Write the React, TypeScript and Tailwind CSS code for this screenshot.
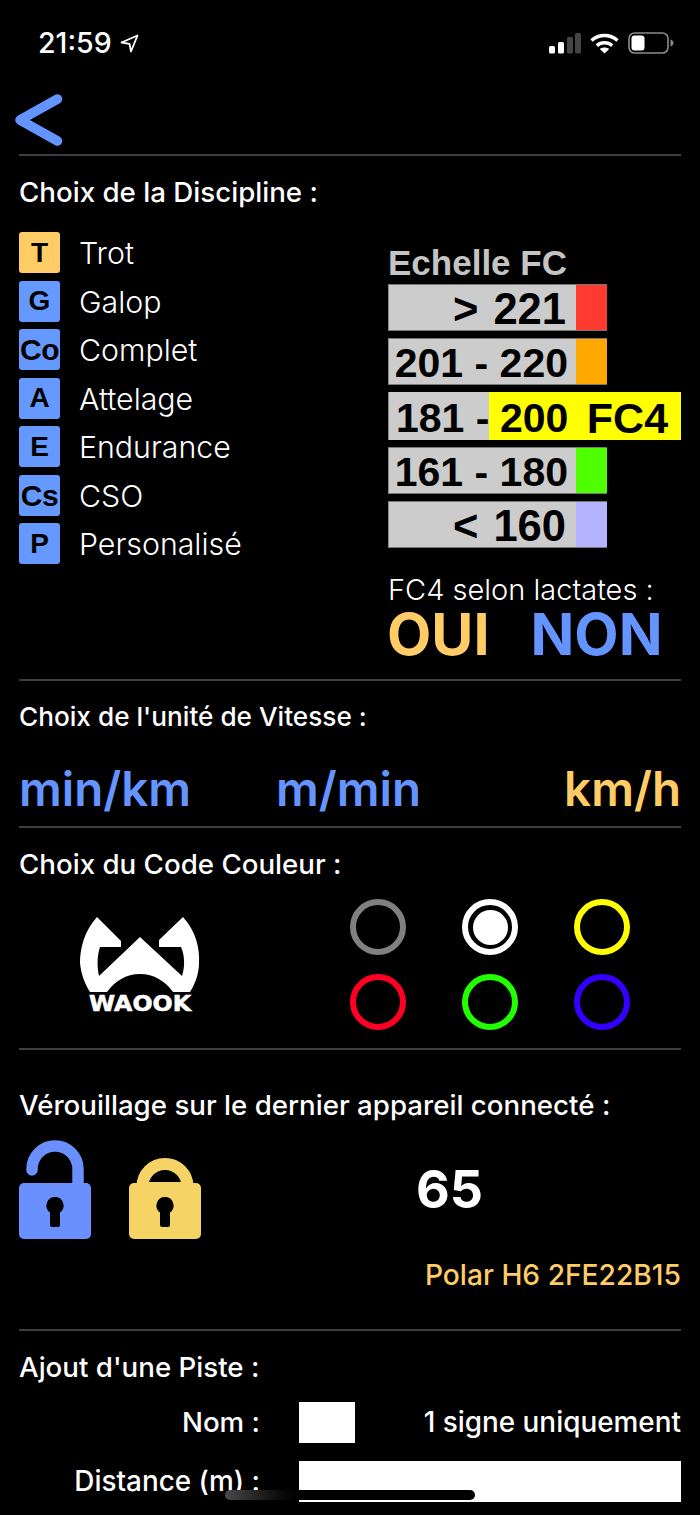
const SANS = "font-['Inter','Liberation_Sans',sans-serif]";

function Divider() {
  return <div className="h-[2px] w-full bg-[#3f3f3f]" />;
}

function Badge({ label, active, sm }: { label: string; active?: boolean; sm?: boolean }) {
  return (
    <div
      className={`flex h-[41px] w-[41px] items-center justify-center rounded-[3px] font-['Liberation_Sans',sans-serif] font-bold text-black ${
        active ? "bg-[#ffcc66]" : "bg-[#6699ff]"
      } ${sm ? "text-[30px] tracking-[-0.5px]" : "text-[28px]"}`}
    >
      {label}
    </div>
  );
}

const disciplines: { b: string; t: string; active?: boolean; sm?: boolean }[] = [
  { b: "T", t: "Trot", active: true },
  { b: "G", t: "Galop" },
  { b: "Co", t: "Complet", sm: true },
  { b: "A", t: "Attelage" },
  { b: "E", t: "Endurance" },
  { b: "Cs", t: "CSO", sm: true },
  { b: "P", t: "Personalisé" },
];

function ScaleRow({ label, color, wide }: { label: string; color: string; wide?: boolean }) {
  return (
    <div className="flex h-[47px] w-[219px] border border-[#8a8a8a] border-r-0 border-y-[#777]">
      <div
        className={`flex w-[187px] items-center justify-end bg-[#cccccc] pt-[5px] font-['Liberation_Sans',sans-serif] font-semibold text-black ${
          wide ? "pr-[10px] text-[43.500px] [word-spacing:3px]" : "pr-[8px] text-[41px]"
        }`}
      >
        <span className="whitespace-pre">{label}</span>
      </div>
      <div className={`w-[31px] ${color}`} />
    </div>
  );
}

function Ring({ color, selected }: { color: string; selected?: boolean }) {
  return (
    <div className={`flex h-[56px] w-[56px] items-center justify-center rounded-full border-[6px] ${color}`}>
      {selected && <div className="h-[35px] w-[35px] rounded-full bg-white" />}
    </div>
  );
}

function Heading({ children, small }: { children: string; small?: boolean }) {
  return (
    <div className={`${small ? "text-[26.200px]" : "text-[27.700px]"} font-medium leading-[32px] whitespace-nowrap text-white`}>
      {children}
    </div>
  );
}

function Keyhole() {
  return <path d="M36 58a8.5 8.5 0 0 1 5 15.4V86a2 2 0 0 1-2 2h-6a2 2 0 0 1-2-2V73.4A8.5 8.5 0 0 1 36 58Z" fill="#000" />;
}

export default function App() {
  return (
    <div className={`relative h-[1515px] w-[700px] overflow-hidden bg-black px-[19px] text-white ${SANS}`}>
      {/* status bar */}
      <div className="flex h-[93px] items-start justify-between pl-[19px] pr-[7px] pt-[25px]">
        <div className="flex items-center gap-[8px]">
          <span className="text-[28.5px] font-medium leading-[36px]">21:59</span>
          <svg width="19" height="19" viewBox="0 0 19 19" fill="none" stroke="#fff" strokeWidth="1.8" strokeLinejoin="round">
            <path d="M1.5 8.5 17.5 1.5 11 17.5 9.5 9.8Z" />
          </svg>
        </div>
        <div className="flex items-center gap-[9px] pt-[7px]">
          <svg width="32" height="21" viewBox="0 0 32 21">
            <rect x="0" y="13" width="6" height="7.5" rx="1.5" fill="#fff" />
            <rect x="9" y="9" width="6" height="11.5" rx="1.5" fill="#fff" />
            <rect x="18" y="4" width="6" height="16.5" rx="1.5" fill="#444" />
            <rect x="26" y="0" width="6" height="20.5" rx="1.5" fill="#444" />
          </svg>
          <svg width="29" height="21" viewBox="0 0 29 21" fill="none">
            <path d="M1.5 7.5C9 .8 20 .8 27.5 7.5" stroke="#fff" strokeWidth="3.4" />
            <path d="M6.8 12.6c4.4-3.8 11-3.8 15.4 0" stroke="#fff" strokeWidth="3.4" />
            <path d="M14.5 20.5 9.8 16c2.7-2 6.7-2 9.4 0Z" fill="#fff" />
          </svg>
          <svg width="46" height="22" viewBox="0 0 46 22">
            <rect x="1" y="1" width="39" height="20" rx="5.5" fill="none" stroke="#8a8a8a" strokeWidth="1.6" />
            <rect x="3.5" y="3.5" width="13" height="15" rx="3" fill="#fff" />
            <path d="M42.5 7.5c2 .6 3 2 3 3.5s-1 2.900-3 3.500Z" fill="#8a8a8a" />
          </svg>
        </div>
      </div>

      {/* back */}
      <div className="-ml-[5px] h-[61px]">
        <svg width="50" height="54" viewBox="0 0 50 54" fill="none">
          <path d="M43.500 6 6 27l37.500 21" stroke="#6494ff" strokeWidth="9.500" strokeLinecap="round" strokeLinejoin="round" />
        </svg>
      </div>
      <Divider />

      {/* discipline */}
      <div className="flex h-[523px] flex-col">
        <div className="pt-[20px]">
          <Heading>Choix de la Discipline :</Heading>
        </div>
        <div className="flex justify-between">
          <div className="flex flex-col gap-[7.500px] pt-[24px]">
            {disciplines.map((d) => (
              <div key={d.b} className="flex items-center gap-[20px]">
                <Badge label={d.b} active={d.active} sm={d.sm} />
                <span className="-ml-[1px] translate-y-[1px] text-[30.300px] font-light leading-[41px]">{d.t}</span>
              </div>
            ))}
          </div>
          <div className="w-[293px] pt-[35px]">
            <div className="font-['Liberation_Sans',sans-serif] text-[35px] font-semibold leading-[40px] text-[#c4c4c4]">
              Echelle FC
            </div>
            <div className="flex flex-col gap-[7px] pt-[1px]">
              <ScaleRow label="> 221" color="bg-[#ff3b30]" wide />
              <ScaleRow label="201 - 220" color="bg-[#ffa800]" />
              <div className="flex h-[48px] w-[293px] border-l border-[#8a8a8a]">
                <div className="flex w-[100px] items-center bg-[#cccccc] pl-[7px] pt-[5px] font-['Liberation_Sans',sans-serif] text-[41px] font-semibold whitespace-pre text-black">
                  181 -
                </div>
                <div className="flex w-[192px] items-center bg-[#ffff00] pl-[11px] pt-[5px] font-['Liberation_Sans',sans-serif] text-[41px] font-semibold whitespace-pre text-black">
                  200 <span className="pl-[7px] text-[43px]">FC4</span>
                </div>
              </div>
              <ScaleRow label="161 - 180" color="bg-[#4dff00]" />
              <ScaleRow label="< 160" color="bg-[#b3b3ff]" wide />
            </div>
            <div className="pt-[25px] text-[29px] font-light leading-[33px] whitespace-nowrap">FC4 selon lactates :</div>
            <div className="mt-[3px] -ml-[1px] flex gap-[41px] text-[57.500px] leading-[50px] font-bold">
              <span className="text-[#ffcc66]">OUI</span>
              <span className="text-[#6494ff]">NON</span>
            </div>
          </div>
        </div>
      </div>
      <Divider />

      {/* speed */}
      <div className="flex h-[145px] flex-col">
        <div className="pt-[20px]">
          <Heading small>Choix de l'unité de Vitesse :</Heading>
        </div>
        <div className="flex pt-[28px] text-[47.500px] leading-[56px] font-semibold">
          <span className="text-[#6494ff]">min/km</span>
          <span className="ml-[85px] text-[#6494ff]">m/min</span>
          <span className="ml-auto text-[#ffcc66]">km/h</span>
        </div>
      </div>
      <Divider />

      {/* colour code */}
      <div className="flex h-[220px] flex-col">
        <div className="pt-[20px]">
          <Heading>Choix du Code Couleur :</Heading>
        </div>
        <div className="flex pt-[3px]">
          <svg width="160" height="130" viewBox="0 0 160 130" className="ml-[41px] mt-[16px] shrink-0">
            <path
              d="M37 18 61 42V48H40C37 57 37 68 39 77L80 38 122 77C125 68 125 57 121 48H99V41L123 18C136 32 140 50 139 64 139 75 135 85 130 93H113C105 82 94 75 80 75 66 75 55 82 47 93H30C25 85 21 75 20 64 20 50 24 32 37 18Z"
              fill="#fff"
            />
            <text
              x="29"
              y="112"
              fill="#fff"
              stroke="#fff"
              strokeWidth="0.6"
              textLength="102"
              lengthAdjust="spacingAndGlyphs"
              className="font-['DejaVu_Sans',sans-serif] text-[22px] font-bold"
            >
              WAOOK
            </text>
          </svg>
          <div className="ml-[130px] grid grid-cols-[56px_56px_56px] gap-x-[56px] gap-y-[19px] pt-[16px]">
            <Ring color="border-[#808080]" />
            <Ring color="border-white" selected />
            <Ring color="border-[#ffff00]" />
            <Ring color="border-[#ff0022]" />
            <Ring color="border-[#22ff00]" />
            <Ring color="border-[#3300ff]" />
          </div>
        </div>
      </div>
      <Divider />

      {/* lock */}
      <div className="flex h-[279px] flex-col">
        <div className="pt-[39px]">
          <Heading>Vérouillage sur le dernier appareil connecté :</Heading>
        </div>
        <div className="flex pt-[18px]">
          <svg width="72" height="100" viewBox="0 0 72 100" className="shrink-0">
            <path d="M13 31V30a23 23 0 0 1 46 0V50" fill="none" stroke="#6a8fff" strokeWidth="11.500" strokeLinecap="round" />
            <rect x="0" y="44" width="72" height="56" rx="5" fill="#6a8fff" />
            <Keyhole />
          </svg>
          <div className="ml-[38px] pt-[19px]">
            <svg width="72" height="81" viewBox="0 0 72 81">
              <path d="M13.500 28.500a22.500 22.500 0 0 1 45 0V30h-45Z" fill="none" stroke="#f6d365" strokeWidth="12" />
              <rect x="0" y="25" width="72" height="56" rx="5" fill="#f6d365" />
              <g transform="translate(0 -19)">
                <Keyhole />
              </g>
            </svg>
          </div>
          <div className="flex-1 pl-[215px] pt-[21px] text-[52px] leading-[60px] font-bold">65</div>
        </div>
        <div className="pt-[20px] text-right text-[28.200px] leading-[32px] font-medium text-[#ffcc66]">Polar H6 2FE22B15</div>
      </div>
      <Divider />

      {/* track */}
      <div className="pt-[20px]">
        <Heading>Ajout d'une Piste :</Heading>
        <div className="mt-[19px] flex h-[41px] items-center">
          <div className="w-[241px] text-right text-[27.700px] font-medium">Nom :</div>
          <div className="ml-[39px] h-[41px] w-[56px] bg-white" />
          <div className="flex-1 text-right text-[27.900px] font-medium whitespace-nowrap">1 signe uniquement</div>
        </div>
        <div className="mt-[18px] flex h-[41px] items-center">
          <div className="w-[241px] text-right text-[27.900px] font-medium whitespace-nowrap">Distance (m) :</div>
          <div className="ml-[39px] h-[41px] flex-1 bg-white" />
        </div>
      </div>

      {/* home indicator */}
      <div className="absolute left-[225px] top-[1490px] h-[10px] w-[250px] rounded-full bg-gradient-to-r from-[#4a4a4a] via-black via-[35%] to-black" />
    </div>
  );
}
